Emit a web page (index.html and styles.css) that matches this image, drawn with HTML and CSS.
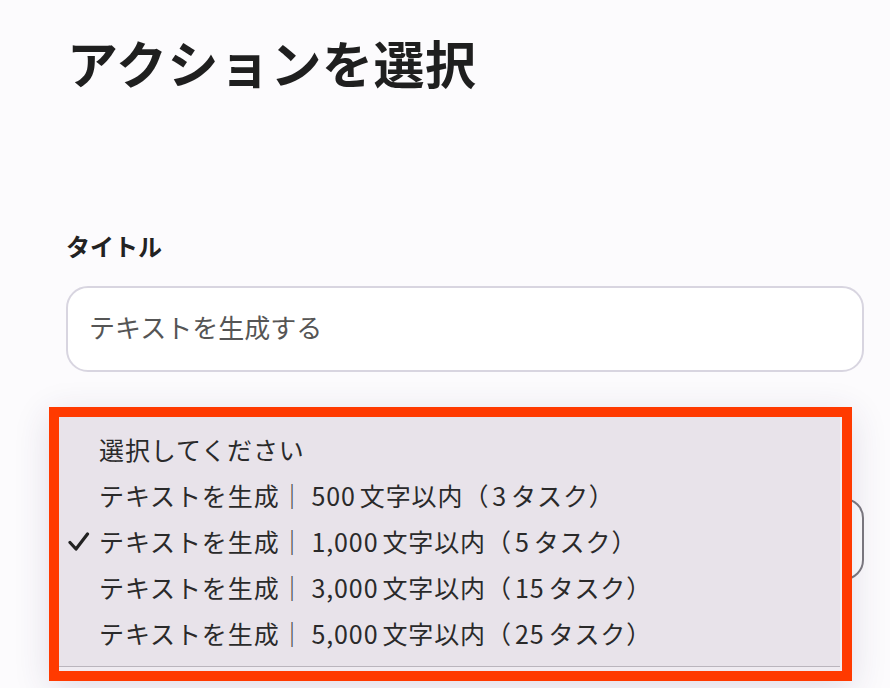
FILE: index.html
```html
<!DOCTYPE html>
<html lang="ja">
  <head>
    <meta charset="UTF-8" />
    <meta name="viewport" content="width=device-width, initial-scale=1.0" />
    <title>アクションを選択</title>
    <link rel="stylesheet" href="styles.css">
  </head>
  <body>
    <main class="page">
      <h1 class="page-title">アクションを選択</h1>

      <div class="field">
        <label class="field-label" for="title">タイトル</label>
        <input class="text-input" type="text" id="title" placeholder="テキストを生成する" />
      </div>

      <div class="field field-action">
        <div class="select-box"></div>

        <div class="menu-frame">
          <ul class="menu">
            <li class="menu-item">選択してください</li>
            <li class="menu-item">テキストを生成<span class="sep">｜</span><span class="num">500</span>文字以内（<span class="num-s">3</span>タスク）</li>
            <li class="menu-item">
              <svg class="check" width="22" height="20" viewBox="0 0 22 20">
                <path d="M2 10.5 L8 17 L19.5 2" fill="none" stroke="#222" stroke-width="3.2" stroke-linecap="round" stroke-linejoin="round" />
              </svg>
              テキストを生成<span class="sep">｜</span><span class="num">1,000</span>文字以内（<span class="num-s">5</span>タスク）
            </li>
            <li class="menu-item">テキストを生成<span class="sep">｜</span><span class="num">3,000</span>文字以内（<span class="num-s">15</span>タスク）</li>
            <li class="menu-item">テキストを生成<span class="sep">｜</span><span class="num">5,000</span>文字以内（<span class="num-s">25</span>タスク）</li>
          </ul>
        </div>
      </div>
    </main>
  </body>
</html>
```

FILE: styles.css
```css
body {
  margin: 0;
  min-height: 688px;
  background-color: #fcfbfd;
  font-family: "Noto Sans CJK JP", "Noto Sans", sans-serif;
  color: #222;
}

.page {
  min-height: 688px;
  padding: 0 26px 0 66px;
}

.page-title {
  margin: 27px 0 0 1px;
  font-size: 51px;
  line-height: 70px;
  font-weight: bold;
  letter-spacing: 0.5px;
  color: #1f1f1f;
}

.field {
  margin-top: 134px;
}

.field-label {
  display: block;
  font-size: 24px;
  line-height: 30px;
  font-weight: bold;
  margin-bottom: 25px;
}

.text-input {
  box-sizing: border-box;
  display: block;
  width: 100%;
  height: 86px;
  padding: 0 20px 5px 21px;
  border: 2px solid #d8d5e0;
  border-radius: 22px;
  background-color: #fff;
  font-family: inherit;
  font-size: 26px;
  color: #333;
  outline: none;
}

.text-input::placeholder {
  color: #555;
}

.field-action {
  position: relative;
  margin-top: 126px;
}

.select-box {
  box-sizing: border-box;
  height: 82px;
  border: 2px solid #7c7a80;
  border-radius: 20px;
  background-color: #fff;
}

.menu-frame {
  position: absolute;
  top: -91px;
  left: -17px;
  box-sizing: border-box;
  width: 803px;
  height: 274px;
  border: 10px solid #ff3a00;
  background-color: #efebf1;
  box-shadow: 0 8px 34px rgba(60, 40, 90, 0.14);
}

.menu {
  list-style: none;
  margin: 0 2px 0 0;
  padding: 9px 0 10px;
  background-color: #e8e3ea;
  border-bottom: 1px solid #bab5bd;
}

.menu-item {
  position: relative;
  padding-left: 40px;
  font-size: 25px;
  line-height: 46px;
  letter-spacing: 0.9px;
  color: #2a2a2a;
}

.sep {
  color: #444;
}

.num {
  margin: 0 4px 0 6px;
}

.num-s {
  margin: 0 4px 0 3px;
}

.check {
  position: absolute;
  left: 9px;
  top: 14px;
}
```
